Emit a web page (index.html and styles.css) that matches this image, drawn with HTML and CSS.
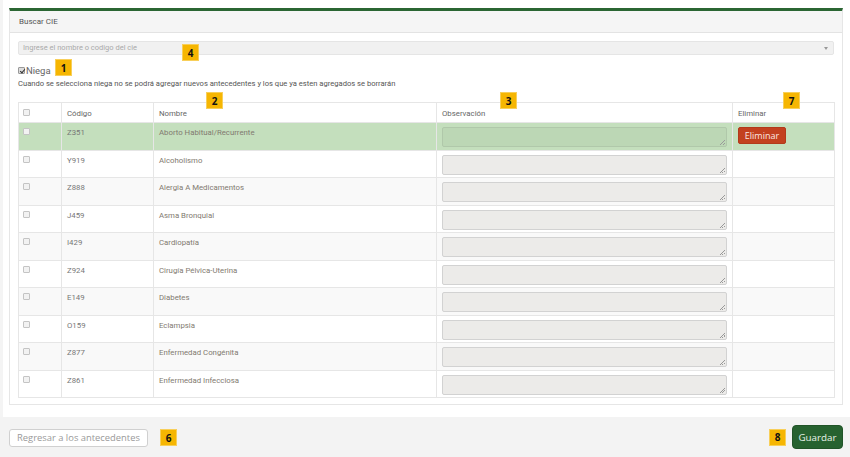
FILE: index.html
```html
<!DOCTYPE html>
<html lang="es">
<head>
<meta charset="utf-8">
<link rel="stylesheet" href="styles.css">
</head>
<body>
<div class="page">
  <div class="panel">
    <div class="panel-head">Buscar CIE</div>
    <div class="panel-body">
      <div class="select">
        <span class="ph">Ingrese el nombre o codigo del cie</span>
        <span class="caret"></span>
        <span class="badge b4">4</span>
      </div>
      <label class="niega"><span class="cb checked"></span>Niega<span class="badge b1">1</span></label>
      <p class="info">Cuando se selecciona niega no se podrá agregar nuevos antecedentes y los que ya esten agregados se borrarán</p>
      <div class="table-wrap">
        <span class="badge b2">2</span>
        <span class="badge b3">3</span>
        <span class="badge b7">7</span>
        <table>
          <colgroup>
            <col class="c1"><col class="c2"><col class="c3"><col class="c4"><col class="c5">
          </colgroup>
          <thead>
            <tr><th><span class="cb"></span></th><th>Código</th><th>Nombre</th><th>Observación</th><th>Eliminar</th></tr>
          </thead>
          <tbody>
            <tr class="sel"><td><span class="cb"></span></td><td>Z351</td><td>Aborto Habitual/Recurrente</td><td><div class="ta"></div></td><td><button class="del">Eliminar</button></td></tr>
            <tr><td><span class="cb"></span></td><td>Y919</td><td>Alcoholismo</td><td><div class="ta"></div></td><td></td></tr>
            <tr><td><span class="cb"></span></td><td>Z888</td><td>Alergia A Medicamentos</td><td><div class="ta"></div></td><td></td></tr>
            <tr><td><span class="cb"></span></td><td>J459</td><td>Asma Bronquial</td><td><div class="ta"></div></td><td></td></tr>
            <tr><td><span class="cb"></span></td><td>I429</td><td>Cardiopatía</td><td><div class="ta"></div></td><td></td></tr>
            <tr><td><span class="cb"></span></td><td>Z924</td><td>Cirugía Pélvica-Uterina</td><td><div class="ta"></div></td><td></td></tr>
            <tr><td><span class="cb"></span></td><td>E149</td><td>Diabetes</td><td><div class="ta"></div></td><td></td></tr>
            <tr><td><span class="cb"></span></td><td>O159</td><td>Eclampsia</td><td><div class="ta"></div></td><td></td></tr>
            <tr><td><span class="cb"></span></td><td>Z877</td><td>Enfermedad Congénita</td><td><div class="ta"></div></td><td></td></tr>
            <tr><td><span class="cb"></span></td><td>Z861</td><td>Enfermedad Infecciosa</td><td><div class="ta"></div></td><td></td></tr>
          </tbody>
        </table>
      </div>
    </div>
  </div>
</div>
<div class="footer">
  <div class="left">
    <button class="back">Regresar a los antecedentes</button>
    <span class="badge inline">6</span>
  </div>
  <div class="right">
    <span class="badge inline">8</span>
    <button class="save">Guardar</button>
  </div>
</div>
</body>
</html>
```
FILE: styles.css
```css
* { box-sizing: border-box; }
html, body { margin: 0; padding: 0; background: #fff; }
body {
  font-family: Roboto, "Liberation Sans", Arial, sans-serif;
  color: #666;
  width: 850px;
  height: 457px;
  overflow: hidden;
}
.page {
  padding: 8px 7px 0 6px;
  height: 417px;
  border-left: 3px solid #f4f4f4;
}
.panel {
  border: 1px solid #e6e6e6;
  border-top: 3px solid #2b6633;
  height: 397px;
  background: #fff;
}
.panel-head {
  height: 22px;
  background: #f5f5f5;
  border-bottom: 1px solid #e3e3e3;
  font-size: 8px;
  line-height: 21px;
  padding-left: 9px;
  color: #555;
}
.panel-body {
  padding: 8px 8px 0 8px;
}
.select {
  position: relative;
  height: 14px;
  background: #f1f1f1;
  border: 1px solid #e5e5e5;
  border-radius: 2px;
  font-size: 7.5px;
  line-height: 12px;
  padding-left: 4px;
  color: #aaa;
}
.caret {
  position: absolute;
  right: 5px;
  top: 5px;
  width: 0; height: 0;
  border-left: 2px solid transparent;
  border-right: 2px solid transparent;
  border-top: 3px solid #999;
}
.niega {
  position: relative;
  display: flex;
  align-items: center;
  margin-top: 10px;
  height: 11px;
  font-size: 9.5px;
  color: #666;
}
.cb {
  display: inline-block;
  width: 7px;
  height: 7px;
  border: 1px solid #c4c4c4;
  border-radius: 1px;
  background: #f2f2f2;
  vertical-align: top;
}
.cb.checked {
  background: #ddd;
  border-color: #999;
  position: relative;
}
.cb.checked::after {
  content: "";
  position: absolute;
  left: 1.5px; top: 0px;
  width: 2px; height: 4px;
  border: solid #333;
  border-width: 0 1px 1px 0;
  transform: rotate(40deg);
}
.niega .cb { margin-right: 1px; }
.info {
  margin: 3px 0 0 0;
  font-size: 7.6px;
  line-height: 10px;
  color: #555;
}
.table-wrap {
  position: relative;
  margin-top: 13px;
}
table {
  width: 816px;
  border-collapse: collapse;
  table-layout: fixed;
  border: 1px solid #e2e2e2;
  font-size: 7.8px;
}
col.c1 { width: 43px; }
col.c2 { width: 92px; }
col.c3 { width: 283px; }
col.c4 { width: 296px; }
col.c5 { width: 102px; }
th, td {
  border: 1px solid #e6e6e6;
  text-align: left;
  vertical-align: top;
  font-weight: normal;
  padding: 5px 5px 0 5px;
  line-height: 10px;
}
th { height: 20px; padding-top: 6px; color: #666; }
th .cb, td .cb { margin-left: -1px; margin-top: 0px; }
tbody tr { height: 27.5px; }
tbody tr:nth-child(odd) { background: #f9f9f9; }
tbody tr.sel { background: #c4dfbd; }
td { color: #777; }
td:nth-child(3) { color: #827a70; }
td:nth-child(4) { padding: 4px 5px 0 5px; }
.ta {
  position: relative;
  height: 20px;
  background: #ecebe9;
  border: 1px solid #d2d2d2;
  border-radius: 2px;
}
.sel .ta { background: #bcd7b5; border-color: #b0c8aa; }
.ta::after {
  content: "";
  position: absolute;
  right: 1px; bottom: 1px;
  width: 5px; height: 5px;
  background: linear-gradient(135deg, transparent 45%, #999 45%, #999 55%, transparent 55%, transparent 70%, #999 70%, #999 80%, transparent 80%);
}
td:nth-child(5) { padding: 4px 6px 0 5px; }
.del {
  font-family: "Open Sans", "Liberation Sans", sans-serif;
  height: 17px;
  width: 48px;
  padding: 0;
  background: #c3411f;
  border: 1px solid #b23a1b;
  border-radius: 2px;
  color: #fbe8e2;
  font-size: 9px;
  line-height: 15px;
}
.badge {
  display: inline-flex;
  align-items: center;
  justify-content: center;
  width: 17px;
  height: 17px;
  background: #f6b602;
  border: 1px solid #f8cf5a;
  color: #111;
  font-family: "Open Sans", "Liberation Sans", sans-serif;
  font-weight: 700;
  font-size: 10px;
}
.select .badge { position: absolute; left: 163px; top: 2px; }
.niega .badge { position: absolute; left: 37px; top: -6px; }
.table-wrap .badge { position: absolute; top: -10px; }
.b2 { left: 188px; }
.b3 { left: 482px; }
.b7 { left: 765px; }
.footer {
  height: 40px;
  background: #f3f3f3;
  display: flex;
  justify-content: space-between;
  align-items: center;
  padding: 0 7px 0 9px;
}
.left, .right { display: flex; align-items: center; }
.left { gap: 12px; padding-top: 1px; }
.right { gap: 6px; }
.back {
  font-family: "Open Sans", "Liberation Sans", sans-serif;
  height: 18px;
  width: 139px;
  padding: 0;
  background: #fff;
  border: 1px solid #d0d0d0;
  border-radius: 3px;
  color: #9a9a9a;
  font-size: 9.4px;
  line-height: 16px;
}
.save {
  font-family: "Open Sans", "Liberation Sans", sans-serif;
  height: 24px;
  width: 51px;
  padding: 0;
  background: #276230;
  border: 1px solid #215428;
  border-radius: 4px;
  color: #eaf3ea;
  font-size: 9.8px;
}
```
